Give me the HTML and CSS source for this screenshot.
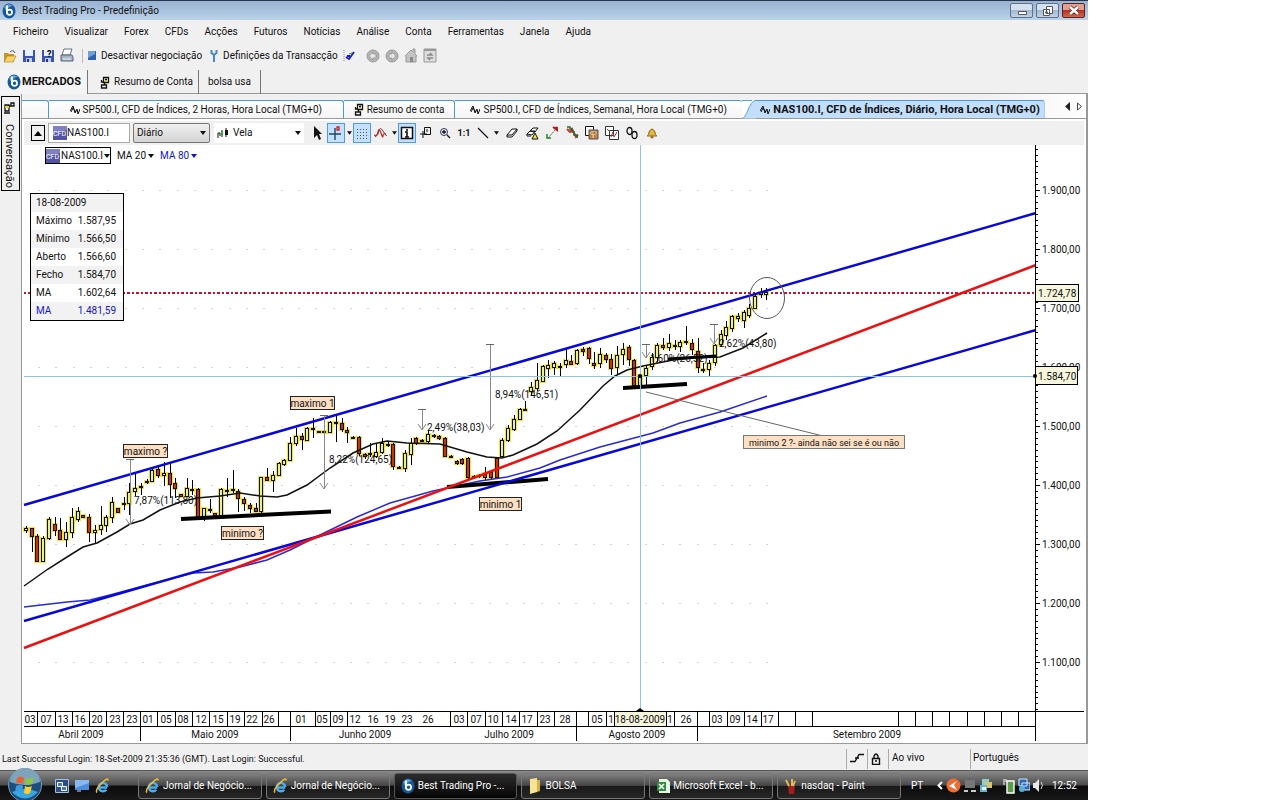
FILE: index.html
```html
<!DOCTYPE html>
<html lang="pt">
<head>
  <meta charset="UTF-8" />
  <title>Best Trading Pro - Predefinição</title>
  <link rel="stylesheet" href="styles.css">
</head>
<body>

  <!-- Shared icons -->
  <svg class="defs" width="0" height="0" aria-hidden="true">
    <symbol id="logo" viewBox="0 0 14 16">
      <ellipse cx="7" cy="8" rx="6.500" ry="7.500" fill="#15599a"/>
      <path d="M2 4q4-5 9-1q-4 0-7 5z" fill="#5da3d6"/>
      <path d="M5 2.500V11" stroke="#fff" stroke-width="1.800"/>
      <circle cx="7.500" cy="9.300" r="2.600" fill="none" stroke="#fff" stroke-width="1.700"/>
    </symbol>
    <symbol id="wave" viewBox="0 0 10 10">
      <path d="M0 6l3-5 2 7 2-4 1 5 2-5M1 7l2-4 3 4" fill="none" stroke="#111"/>
    </symbol>
    <symbol id="account" viewBox="0 0 10 13">
      <path d="M3.500 1.500h5v5h-5zM5 3.500h2M4.500 6.500v3M1.500 12v-3h5v3zM1.500 4v2h2" fill="none" stroke="#111" stroke-width="1.300"/>
      <path d="M5 4h2v2H5z" fill="#c8b838"/>
    </symbol>
    <symbol id="cfd" viewBox="0 0 14 14">
      <path d="M0 0h14v14H0z" fill="#5454a4"/>
      <path d="M0 0h14v4L0 8z" fill="#8080c4"/>
    </symbol>
    <symbol id="disk" viewBox="0 0 14 14">
      <path d="M1 1h12v12H1z" fill="#3a53b4"/>
      <path d="M3 1h8v6H3z" fill="#e8effc"/>
      <path d="M4 9h6v4H4z" fill="#c4cce0"/>
      <path d="M5 10h2v3H5z" fill="#223388"/>
    </symbol>
    <symbol id="caret" viewBox="0 0 6 4">
      <path d="M0 0h6L3 4z" fill="currentColor"/>
    </symbol>
    <symbol id="ie" viewBox="0 0 16 16">
      <path d="M13 9.500H5M12 12a4.500 4.500 0 1 1 1-3" fill="none" stroke="#48aef0" stroke-width="2.600"/>
      <path d="M2 15Q0 12 7 5T14 2" fill="none" stroke="#f4bd2c" stroke-width="1.600"/>
    </symbol>
  </svg>

  <div class="desktop">
    <header class="titlebar">
      <svg class="logo" width="14" height="16"><use href="#logo"/></svg>
      <span class="title">Best Trading Pro - Predefinição</span>
      <button class="win-btn" aria-label="Minimizar"><svg width="20" height="14"><path d="M6.500 7.500h8v3h-8z" fill="#fff" stroke="#556"/></svg></button>
      <button class="win-btn" aria-label="Restaurar"><svg width="20" height="14"><path d="M8.500 2.500h6v7h-6zM5.500 5.500h6v6h-6zM7.500 8h2v1h-2z" fill="#fff" stroke="#556"/></svg></button>
      <button class="win-btn close" aria-label="Fechar"><svg width="20" height="14"><path d="M6 3l8 7M14 3l-8 7" stroke="#622" stroke-width="4"/><path d="M6 3l8 7M14 3l-8 7" stroke="#fff" stroke-width="2.400"/></svg></button>
    </header>

    <nav class="menu">
      <a href="#">Ficheiro</a>
      <a href="#">Visualizar</a>
      <a href="#">Forex</a>
      <a href="#">CFDs</a>
      <a href="#">Acções</a>
      <a href="#">Futuros</a>
      <a href="#">Notícias</a>
      <a href="#">Análise</a>
      <a href="#">Conta</a>
      <a href="#">Ferramentas</a>
      <a href="#">Janela</a>
      <a href="#">Ajuda</a>
    </nav>

    <div class="toolbar">
      <button aria-label="Abrir"><svg width="14" height="14"><path d="M1 4h4l1 1h5v8H1z" fill="#c8952c"/><path d="M1 13l3-6h9l-3 6z" fill="#f8d46a" stroke="#a8781c" stroke-width=".6"/><path d="M7 3q3-3 5 1" fill="none" stroke="#456"/></svg></button>
      <button aria-label="Guardar"><svg width="14" height="14"><use href="#disk"/></svg></button>
      <button class="save-as" aria-label="Guardar como"><svg width="14" height="14"><use href="#disk"/><text x="6" y="8">?</text></svg></button>
      <button aria-label="Imprimir"><svg width="14" height="15"><path d="M4 1h8l-2 6H2z" fill="#fff" stroke="#678"/><path d="M1 7h11l1 2v4H1z" fill="#a9b6c4" stroke="#56657a"/><path d="M3 11h8" stroke="#eef"/></svg></button>
      <span class="sep"></span>
      <button class="text"><svg width="8" height="10"><path d="M0 0h8v9H0z" fill="#2f62ae"/><path d="M0 0h7v3L0 7z" fill="#70a0d8"/></svg>Desactivar negociação</button>
      <button class="text second"><svg width="8" height="12"><path d="M1.500 0v3L4 5l2.500-2V0M4 5v7" fill="none" stroke="#4a86c0" stroke-width="2"/></svg>Definições da Transacção</button>
      <button class="check" aria-label="Confirmar"><svg width="12" height="14"><path d="M1 1v12" stroke="#88a" stroke-dasharray="1 1"/><path d="M3 8l3 2 5-7M4 7l3 0" fill="none" stroke="#2020c0" stroke-width="2"/><path d="M6 5l3-1" stroke="#3c9c48"/></svg></button>
      <button aria-label="Anterior"><svg width="14" height="14"><circle cx="7" cy="7" r="6" fill="#b4b4b4" stroke="#999"/><path d="M3 7l4-4v2h3v4H7v2z" fill="#e4e4e4" stroke="#888" stroke-width=".6"/></svg></button>
      <button aria-label="Seguinte"><svg width="14" height="14"><circle cx="7" cy="7" r="6" fill="#b4b4b4" stroke="#999"/><path d="M11 7L7 3v2H4v4h3v2z" fill="#e4e4e4" stroke="#888" stroke-width=".6"/></svg></button>
      <button aria-label="Início"><svg width="14" height="15"><path d="M1 8l6-6 2 2V1h2v5l2 2h-1v6H2V8z" fill="#c4c4c4" stroke="#999"/><path d="M6 9h3v5H6z" fill="#888"/></svg></button>
      <button aria-label="Actualizar"><svg width="14" height="15"><path d="M1 1h12v13H1z" fill="#ddd" stroke="#999"/><path d="M1 2h12" stroke="#999" stroke-width="2"/><path d="M4 7h5L7 5M10 10H5l2 2" fill="none" stroke="#888" stroke-width="1.400"/></svg></button>
    </div>

    <div class="main-tabs">
      <button class="main-tab active"><svg width="14" height="16"><use href="#logo"/></svg>MERCADOS</button>
      <button class="main-tab account"><svg width="10" height="13"><use href="#account"/></svg>Resumo de Conta</button>
      <button class="main-tab">bolsa usa</button>
    </div>

    <div class="workspace">
      <aside class="sidebar">
        <button><svg width="14" height="14"><path d="M3 4h4v6H3zM2 12h6M9 2h3v3H9zM7 5h2" fill="none" stroke="#111" stroke-width="1.300"/><path d="M3 5h4v2H3z" fill="#d8d820"/></svg><span>Conversação</span></button>
      </aside>

      <section class="panel">
        <div class="tabs">
          <span class="tab-stub"></span>
          <button class="tab t1"><svg width="10" height="10"><use href="#wave"/></svg>SP500.I, CFD de Índices, 2 Horas, Hora Local (TMG+0)</button>
          <button class="tab t2"><svg width="10" height="13"><use href="#account"/></svg>Resumo de conta</button>
          <button class="tab t3"><svg width="10" height="10"><use href="#wave"/></svg>SP500.I, CFD de Índices, Semanal, Hora Local (TMG+0)</button>
          <svg class="wedge" width="14" height="19"><path d="M0 0h13Q9 1 6 10T0 18z" fill="#fff"/><path d="M0 18.500Q3 18 6 10T13 .500h1v18z" fill="#c2defa"/><path d="M0 18.500Q3 18 6 10T13 .500h1M0 .500h10" fill="none" stroke="#58a0e4"/></svg>
          <button class="tab t4"><svg width="10" height="10"><use href="#wave"/></svg>NAS100.I, CFD de Índices, Diário, Hora Local (TMG+0)</button>
          <span class="tab-nav">
            <button aria-label="Separador anterior"><svg width="5" height="9"><path d="M5 0v9L0 4.500z" fill="#222"/></svg></button>
            <button aria-label="Separador seguinte"><svg width="5" height="9"><path d="M.5 1v7L4.500 4.500z" fill="none" stroke="#444"/></svg></button>
          </span>
        </div>

        <div class="chart-tools">
          <button class="up" aria-label="Subir"><svg width="8" height="5"><path d="M4 0l4 5H0z" fill="#000"/></svg></button>
          <label class="symbol"><svg class="cfd" width="14" height="14"><use href="#cfd"/><text x="0" y="10">CFD</text></svg><input type="text" value="NAS100.I" aria-label="Símbolo"></label>
          <span class="drop period"><select aria-label="Período"><option>Diário</option></select><svg width="6" height="4"><use href="#caret"/></svg></span>
          <span class="drop style"><svg class="candle-icon" width="12" height="12"><path d="M1 6v5M1 6h2v3M5 3v7M9 1v9" fill="none" stroke="#111"/><path d="M4 4h2v4H4z" fill="#3a3"/><path d="M8 3h3v5H8z" fill="#111"/></svg><select aria-label="Estilo"><option>Vela</option></select><svg width="6" height="4"><use href="#caret"/></svg></span>
          <div class="group">
            <button aria-label="Ponteiro"><svg width="14" height="16"><path d="M4 1v12l3-3 2 5 2-1-2-5h3z" fill="#111"/></svg></button>
            <button class="on" aria-label="Cruz"><svg width="16" height="16"><path d="M1 9h12M7 3v12" stroke="#246" stroke-width="1.400"/><path d="M9 2h2v3H9z" fill="none" stroke="#c22" stroke-width="1.300"/></svg></button>
            <button class="caret" aria-label="Opções da cruz"><svg width="5" height="4"><use href="#caret"/></svg></button>
            <button class="on" aria-label="Grelha"><svg width="16" height="16"><path d="M3 4.500h11M3 7.500h11M3 10.500h11M3 13.500h11" stroke="#456" stroke-dasharray="1 2"/></svg></button>
            <button aria-label="Indicadores"><svg width="14" height="12"><path d="M0 8q3 2 4-3t3 1t2 3t3-2" fill="none" stroke="#c22" stroke-width="1.200"/><path d="M1 10q3-1 4-6t4 0t4 5" fill="none" stroke="#733"/></svg></button>
            <button class="caret" aria-label="Opções de indicadores"><svg width="5" height="4"><use href="#caret"/></svg></button>
            <button class="on" aria-label="Informação"><svg width="14" height="14"><path d="M1.500 1.500h11v11h-11z" fill="#fff" stroke="#111" stroke-width="1.500"/><path d="M7 3v2M5 6h2v5M5 11h4" fill="none" stroke="#111" stroke-width="1.600"/></svg></button>
            <button aria-label="Nota"><svg width="14" height="14"><path d="M5.500 1.500h6v7h-6zM8 3v3M1 8h7M4 5v7" fill="none" stroke="#111"/></svg></button>
            <button aria-label="Ampliar"><svg width="12" height="12"><circle cx="5" cy="5" r="3.500" fill="none" stroke="#336"/><path d="M3 5h4M5 3v4M8 8l3 3" stroke="#111" stroke-width="1.300"/></svg></button>
            <button class="ratio">1:1</button>
            <button aria-label="Linha"><svg width="12" height="12"><path d="M1 1l10 10" stroke="#111" stroke-width="1.300"/></svg></button>
            <button class="caret" aria-label="Opções de linha"><svg width="5" height="4"><use href="#caret"/></svg></button>
          </div>
          <div class="group wide">
            <button aria-label="Apagar"><svg width="12" height="12"><path d="M1 8l5-6h5L6 8zM1 8v2h5l5-6V2" fill="#fff" stroke="#111"/></svg></button>
            <button aria-label="Apagar tudo"><svg width="13" height="14"><path d="M4 5l3-3h5L9 6zM1 8l3-3h5L6 9zM1 8v2h4" fill="#fff" stroke="#111"/><path d="M6 13l3-6 3 6z" fill="#ee3" stroke="#111"/></svg></button>
            <button aria-label="Ordens"><svg width="12" height="14"><path d="M2 12L10 3" stroke="#555" stroke-dasharray="2 1"/><path d="M7 1l4 3V1M9 3l2-2" stroke="#a22" stroke-width="2"/><path d="M1 8v4h4" fill="none" stroke="#282" stroke-width="1.500"/></svg></button>
            <button aria-label="Posições"><svg width="13" height="14"><path d="M1 3l3 3 2-3 4 8 2-2" fill="none" stroke="#c33" stroke-width="2"/><path d="M1 1h3v2h2v3h2v3h3v3" fill="none" stroke="#2a6a30" stroke-width="1.500"/></svg></button>
            <button aria-label="Copiar modelo"><svg width="14" height="14"><path d="M.5.500h8v9h-8z" fill="#fff" stroke="#111"/><path d="M4 4h9v9H4z" fill="#c08040" stroke="#555"/><path d="M6 6h5v2H6zM8 6v6" stroke="#f8d8a0"/></svg></button>
            <button aria-label="Colar modelo"><svg width="14" height="14"><path d="M.5.500h8v9h-8zM4.500 4.500h9v9h-9z" fill="#fff" stroke="#333"/><path d="M2 3l3 3M6 11l2-5 1 5 3-5" fill="none" stroke="#933"/></svg></button>
            <button aria-label="Ligar gráficos"><svg width="12" height="14"><ellipse cx="3.500" cy="5" rx="2.500" ry="3.500" fill="none" stroke="#111" stroke-width="1.300"/><ellipse cx="8.500" cy="9" rx="2.500" ry="3.500" fill="none" stroke="#111" stroke-width="1.300"/></svg></button>
            <button aria-label="Alerta"><svg width="12" height="12"><path d="M1 9q2-1 2-4q3-6 6 0q0 3 2 4z" fill="#e0b838" stroke="#8c6818"/><circle cx="6" cy="10" r="1.500" fill="#a07020"/></svg></button>
          </div>
        </div>

        <div class="chart">
          <svg id="chart" viewBox="22 145 1064 598" preserveAspectRatio="xMinYMin meet"></svg>

          <div class="indicators">
            <button class="inst"><svg class="cfd" width="14" height="14"><use href="#cfd"/><text x="0" y="10">CFD</text></svg>NAS100.I<svg width="6" height="4"><use href="#caret"/></svg></button>
            <button>MA 20<svg width="6" height="4"><use href="#caret"/></svg></button>
            <button class="blue">MA 80<svg width="6" height="4"><use href="#caret"/></svg></button>
          </div>

          <table class="quote">
            <tr><th colspan="2">18-08-2009</th></tr>
            <tr><th>Máximo</th><td>1.587,95</td></tr>
            <tr><th>Mínimo</th><td>1.566,50</td></tr>
            <tr><th>Aberto</th><td>1.566,60</td></tr>
            <tr><th>Fecho</th><td>1.584,70</td></tr>
            <tr><th>MA</th><td>1.602,64</td></tr>
            <tr class="blue"><th>MA</th><td>1.481,59</td></tr>
          </table>
        </div>
      </section>
    </div>

    <div class="status">
      <span class="login">Last Successful Login: 18-Set-2009 21:35:36 (GMT). Last Login: Successful.</span>
      <span class="cell icon"><svg width="14" height="10"><path d="M0 8.500h5l4-7h5M5 5h4" fill="none" stroke="#111" stroke-width="1.300"/></svg></span>
      <span class="cell icon"><svg width="10" height="12"><path d="M1.500 5.500h7v6h-7zM3 5V3q2-4 4 0v2M4 8h2" fill="none" stroke="#111" stroke-width="1.400"/></svg></span>
      <span class="cell live">Ao vivo</span>
      <span class="cell lang">Português</span>
    </div>

    <footer class="taskbar">
      <button class="start" aria-label="Iniciar">
        <svg width="36" height="34"><circle cx="18" cy="18" r="16.500" fill="#1c4f80" stroke="#7d98ac"/><path d="M3 15a15 14 0 0 1 30 0q-15 6-30 0z" fill="#7ea4bc"/><path d="M5 25q13 13 26 0q-13-6-26 0z" fill="#3aa8e0"/><path d="M10 11q4-3 7 0l-1 6q-4-2-7 0z" fill="#ea6030"/><path d="M19 11q4 2 8-1l-2 7q-4 2-7 0z" fill="#8cc63c"/><path d="M9 19q4-2 7 0l-1 7q-4-3-7 0z" fill="#3c9ce0"/><path d="M18 19q3 2 7 0l-2 7q-3 2-6 0z" fill="#fccc30"/></svg>
      </button>
      <div class="quick">
        <button aria-label="Mudar de janela"><svg width="14" height="14"><path d="M.5.500h13v13H.5z" fill="#2c4c88" stroke="#a8c0e0"/><path d="M2.500 3.500h5v4h-5zM6.500 7.500h5v4h-5z" fill="#4878b8" stroke="#fff"/></svg></button>
        <button aria-label="Ambiente de trabalho"><svg width="14" height="14"><path d="M0 1h14v10H0z" fill="#4c8cdc"/><path d="M0 1h14v3L0 9z" fill="#88b8f0"/><path d="M2 12h4" stroke="#dde"/></svg></button>
        <button aria-label="Internet Explorer"><svg width="15" height="16"><use href="#ie"/></svg></button>
      </div>
      <div class="tasks">
        <button><svg width="15" height="16"><use href="#ie"/></svg>Jornal de Negócio...</button>
        <button><svg width="15" height="16"><use href="#ie"/></svg>Jornal de Negócio...</button>
        <button class="current"><svg width="14" height="16"><use href="#logo"/></svg>Best Trading Pro -...</button>
        <button><svg width="14" height="16"><path d="M2 1l7-1v14l-7 2z" fill="#f8e494"/><path d="M9 2h3v11l-3 1z" fill="#d8b040"/></svg>BOLSA</button>
        <button><svg width="14" height="16"><path d="M3 1h8l3 3v11H3z" fill="#e8f4e4"/><path d="M1 4h9v9H1z" fill="#2c8c3c"/><path d="M3 6l5 5M8 6l-5 5" stroke="#fff" stroke-width="1.600"/></svg>Microsoft Excel - b...</button>
        <button><svg width="14" height="16"><path d="M4 8h7l-1 8H5z" fill="#a02020"/><path d="M5 8L2 2M8 8V1M9 8l2-5" stroke="#e8b858" stroke-width="2"/></svg>nasdaq - Paint</button>
      </div>
      <div class="tray">
        <span class="kbd">PT</span>
        <svg width="6" height="9"><path d="M5 1L1.500 4.500 5 8" fill="none" stroke="#fff" stroke-width="2"/></svg>
        <svg width="15" height="15"><circle cx="7.500" cy="7.500" r="7" fill="#ee6c30"/><path d="M3 8l8-5-3 4 3 5z" fill="#fff"/></svg>
        <svg width="12" height="14"><path d="M1 1h10v8H1z" fill="#777"/><path d="M0 12h4M7 12h5" stroke="#ccc" stroke-width="2"/></svg>
        <svg class="last" width="14" height="15"><path d="M3 1h7v8H3z" fill="#8cd0c8"/><path d="M6 4h7v6H6z" fill="#d8c470"/><path d="M1 7h7v7H1z" fill="#68b0d8"/><path d="M3 9h4v3H3z" fill="#e8f8ff"/></svg>
        <svg width="12" height="16"><path d="M4 3h7v12H4z" fill="#5c9c48" stroke="#fff" stroke-width="1.400"/><path d="M1 1v6M3 1v3" stroke="#fff"/></svg>
        <svg width="12" height="15"><path d="M1 1h8v7H1zM4 5h8v7H4z" fill="#2868b8" stroke="#d8e8f8"/><circle cx="4" cy="11" r="3" fill="#58b0d8"/></svg>
        <svg width="11" height="13"><path d="M0 4h2l4-4v13L2 9H0z" fill="#e8e8e8"/><path d="M8 3q3 3 0 7" fill="none" stroke="#ddd"/></svg>
        <time>12:52</time>
      </div>
    </footer>
  </div>

  <script src="chart.js"></script>
</body>
</html>
```
FILE: styles.css
```css
* {
  box-sizing: border-box;
}

body {
  margin: 0;
  background: #fff;
  color: #111;
  font-family: Roboto, "Liberation Sans", sans-serif;
  font-size: 10px;
  line-height: 14px;
}

button {
  display: inline-flex;
  align-items: center;
  justify-content: center;
  margin: 0;
  padding: 0;
  border: none;
  background: none;
  color: inherit;
  font: inherit;
  white-space: nowrap;
}

svg {
  display: block;
  flex-shrink: 0;
}

.defs {
  position: absolute;
}

.desktop {
  display: flex;
  flex-direction: column;
  width: 85vw;
  min-height: 100vh;
  background: #f0f0f0;
}

/* Title bar */
.titlebar {
  display: flex;
  align-items: center;
  gap: 3px;
  height: 20px;
  padding: 0 3px 0 2px;
  border-top: 1px solid #26354c;
  background: linear-gradient(#98b2d0, #bad2ea);
}

.title {
  flex: 1;
  padding-left: 3px;
}

.win-btn {
  width: 23px;
  height: 15px;
  border: 1px solid #5d7188;
  border-radius: 2px;
  background: linear-gradient(#d4e0ee 45%, #a3b7ce 50%, #c0d4e8);
}

.win-btn.close {
  border-color: #5c2420;
  background: linear-gradient(#e0a090 45%, #b83020 50%, #d06848);
}

/* Menu */
.menu {
  display: flex;
  align-items: center;
  gap: 16px;
  height: 23px;
  padding-left: 13px;
}

.menu a {
  color: inherit;
  text-decoration: none;
}

.toolbar {
  display: flex;
  align-items: center;
  gap: 5px;
  height: 25px;
  padding-left: 3px;
}

.toolbar .sep {
  width: 1px;
  height: 14px;
  margin-left: 3px;
  background: #bbb;
}

.toolbar .text {
  gap: 5px;
}

.toolbar .second {
  margin-left: 3px;
}

.toolbar .check {
  margin-right: 6px;
}

.save-as text {
  font-size: 9px;
  font-weight: bold;
}

/* Main tabs */
.main-tabs {
  display: flex;
  height: 26px;
  padding-top: 2px;
  border-bottom: 1px solid #999;
}

.main-tab {
  gap: 4px;
  height: 24px;
  padding: 0 9px;
  border-right: 1px solid #777;
}

.main-tab.account {
  padding: 0 5px 0 12px;
}

.main-tab.active {
  gap: 1px;
  padding: 0 6px 0 7px;
  background: #f4f4f4;
  font-size: 11px;
  font-weight: bold;
}

/* Workspace */
.workspace {
  display: flex;
  flex: 1;
}

.sidebar {
  width: 21px;
  padding: 2px 1px 0;
}

.sidebar button {
  flex-direction: column;
  justify-content: flex-start;
  gap: 9px;
  width: 19px;
  height: 95px;
  padding: 4px 4px 0 0;
  border: 1px solid #000;
  font-size: 11px;
}

.sidebar span {
  writing-mode: vertical-rl;
}

.panel {
  display: flex;
  flex: 1;
  flex-direction: column;
  min-width: 0;
  margin-bottom: 1px;
  border: solid #999;
  border-width: 0 2px 1px 1px;
  background: #fff;
}

.tabs {
  display: flex;
  height: 25px;
  padding-top: 6px;
  border-bottom: 1px solid #999;
  background: linear-gradient(90deg, #f0f0f0 90%, #fff);
}

.tab-stub,
.tab {
  border: solid #4a98e0;
  border-width: 1px 1px 0 0;
  border-radius: 0 3px 0 0;
  background: linear-gradient(#fff, #f4f4f4);
}

.tab {
  gap: 3px;
  min-width: 0;
}

.tab-stub {
  flex: 26;
}

.t1 {
  flex: 295;
}

.t2 {
  flex: 111;
}

.t3 {
  flex: 288;
  border-right: none;
}

.wedge {
  margin-bottom: -1px;
}

.t4 {
  flex: 289;
  border-right-color: #a8ccf0;
  background: #c2defa;
  font-size: 11px;
  font-weight: bold;
}

.tab-nav {
  display: flex;
  align-items: center;
  gap: 7px;
  padding: 0 4px 6px 20px;
}

.chart-tools {
  display: flex;
  align-items: center;
  height: 24px;
  margin: 2px 2px 0;
  padding-left: 7px;
  background: #f0f0f0;
}

.up {
  width: 14px;
  height: 16px;
  border: 1px solid #000;
}

.symbol {
  display: flex;
  align-items: center;
  width: 82px;
  height: 20px;
  margin-left: 3px;
  padding-left: 4px;
  border: 1px solid #aaa;
  background: #fff;
}

.symbol input {
  width: 60px;
  padding: 0;
  border: none;
  background: none;
  color: inherit;
  font: inherit;
}

.chart-tools .cfd text,
.chart .cfd text {
  fill: #fff;
  font-size: 7px;
}

.drop {
  display: flex;
  align-items: center;
  height: 20px;
  padding: 0 3px;
  background: #fff;
}

.drop select {
  flex: 1;
  padding: 0;
  border: none;
  appearance: none;
  background: none;
  color: inherit;
  font: inherit;
}

.period {
  width: 77px;
  margin: 0 4px 0 3px;
  border: 1px solid #777;
  border-radius: 2px;
  background: linear-gradient(#f0f0f0, #d4d4d4);
}

.style {
  width: 90px;
}

.candle-icon {
  margin-right: 4px;
}

.group {
  display: flex;
  gap: 1px;
  margin-left: 4px;
}

.group.wide {
  gap: 2px;
  margin-left: 4px;
}

.group button {
  width: 18px;
  height: 20px;
}

.group .caret {
  width: 6px;
}

.group .ratio {
  font-size: 9px;
  font-weight: bold;
}

.group .on {
  border: 1px solid #4a9cee;
  background: #c4e0fc;
}

/* Chart */
.chart {
  position: relative;
  flex: 1;
}

.chart > svg {
  width: 100%;
}

.chart text {
  fill: #111;
}

.chart .mid {
  text-anchor: middle;
}

.chart .long {
  font-size: 9px;
}

.crisp {
  shape-rendering: crispEdges;
}

.indicators {
  position: absolute;
  top: 2px;
  left: 23px;
  display: flex;
  gap: 6px;
}

.indicators button {
  gap: 2px;
  height: 17px;
}

.indicators .inst {
  gap: 1px;
  width: 66px;
  border: 1px solid #000;
}

.blue {
  color: #1414d8;
}

.quote {
  position: absolute;
  top: 48px;
  left: 8px;
  width: 94px;
  border: 1px solid #000;
  border-spacing: 0;
  background: #fff;
}

.quote th,
.quote td {
  height: 18px;
  padding: 0 0 0 5px;
  font-weight: normal;
  text-align: left;
}

.quote td {
  padding: 0 7px 0 0;
  text-align: right;
}

.quote tr:nth-child(odd) {
  background: #f2f2f2;
}

/* Status bar */
.status {
  display: flex;
  align-items: center;
  height: 25px;
  padding: 4px 0 1px 2px;
}

.login {
  flex: 1;
  font-size: 9px;
}

.cell {
  height: 20px;
  padding: 2px 3px;
  border-left: 1px solid #aaa;
}

.cell.icon {
  width: 21px;
  padding-top: 4px;
}

.cell.live {
  width: 82px;
}

.cell.lang {
  width: 118px;
  padding-left: 2px;
}

/* Taskbar */
.taskbar {
  display: flex;
  align-items: center;
  height: 30px;
  border-top: 1px solid #555;
  background: linear-gradient(#8a8a8a, #4c4c4c 48%, #0c0c0c 52%, #181818);
  color: #fff;
}

.start {
  width: 36px;
  height: 34px;
  margin: -4px 12px 0 7px;
}

.quick {
  display: flex;
  gap: 6px;
  width: 83px;
}

.tasks {
  display: flex;
  flex: 1;
  gap: 4px;
}

.tasks button {
  flex: 1;
  justify-content: flex-start;
  gap: 3px;
  height: 26px;
  padding-left: 6px;
  border: 1px solid #777;
  border-radius: 3px;
  background: linear-gradient(#808080, #444 48%, #1a1a1a 52%, #262626);
}

.tasks .current {
  border-color: #555;
  background: linear-gradient(#2c2c2c, #050505);
}

.tray {
  display: flex;
  align-items: center;
  gap: 3px;
  width: 187px;
  padding-left: 10px;
}

.kbd {
  width: 23px;
}

.tray .last {
  margin-right: 7px;
}

.tray time {
  margin-left: 5px;
}
```
FILE: chart.js
```js
const svg = document.getElementById('chart');

// Each candle: high, body top, body bottom, low, 1 = up / 0 = down
const candles = [
  [526,528,531,533,1], [528,528,537,552,0], [534,536,562,562,0], [536,538,562,562,1], [517,519,539,540,1],
  [517,524,531,536,0], [518,530,540,540,0], [522,532,540,547,1], [508,517,533,538,1], [507,511,520,522,1],
  [515,515,518,518,0], [514,517,533,542,0], [525,530,533,543,1], [506,525,530,535,1], [515,517,526,532,1],
  [497,502,518,523,1], [508,508,513,513,0], [497,503,505,510,1], [483,492,504,515,1], [472,488,492,496,1],
  [483,486,488,495,1], [479,481,482,484,1], [469,470,482,482,1], [467,469,476,478,0], [462,473,476,486,1],
  [463,473,485,498,0], [478,483,489,498,0], [494,494,497,497,0], [478,488,497,497,1], [480,489,491,495,1],
  [488,489,518,519,0], [508,508,517,521,1], [499,509,511,513,0], [513,513,516,516,0], [488,489,516,516,1],
  [478,490,492,497,0], [470,489,491,493,0], [489,491,499,512,0], [497,499,504,511,0], [503,505,509,513,0],
  [503,508,512,512,0], [477,477,512,517,1], [468,477,481,481,0], [471,475,481,492,1], [462,463,476,476,1],
  [459,460,465,466,1], [437,443,461,461,1], [428,436,444,446,1], [433,436,440,450,0], [427,428,441,441,1],
  [418,428,430,438,0], [431,431,433,433,0], [429,431,433,435,0], [421,422,433,433,1], [416,422,424,442,0],
  [418,423,430,432,0], [427,430,433,443,0], [436,437,438,439,0], [436,437,454,456,0], [453,454,457,459,0],
  [443,453,455,457,0], [444,452,457,458,1], [438,443,453,454,1], [442,444,446,447,0], [443,444,467,470,0],
  [466,467,469,469,0], [450,453,469,472,1], [438,443,455,465,1], [437,438,444,445,0], [439,440,441,442,1],
  [430,434,442,443,1], [434,435,437,438,1], [435,436,439,440,0], [437,438,457,457,0], [455,456,457,458,1],
  [460,461,464,465,0], [458,459,464,465,0], [457,458,478,479,0], [475,476,478,479,0], [474,475,477,478,0],
  [467,473,478,481,0], [471,472,478,479,0], [457,458,478,479,0], [438,440,457,457,1], [425,428,441,442,1],
  [415,419,430,431,1], [408,409,420,420,1], [401,409,411,411,0], [382,387,392,395,1], [363,380,389,391,1],
  [365,366,382,382,1], [360,365,369,378,1], [361,363,368,375,1], [363,366,368,376,0], [348,360,365,368,1],
  [355,361,365,365,0], [349,350,364,365,1], [347,349,352,356,0], [347,348,359,364,0], [352,363,366,369,0],
  [348,354,364,368,1], [353,355,360,363,0], [354,359,369,375,0], [346,355,368,375,1], [343,349,355,365,1],
  [345,347,360,366,0], [359,360,386,387,0], [373,375,386,387,1], [365,368,376,385,1], [353,357,367,370,1],
  [343,345,358,362,1], [338,345,348,350,0], [334,343,348,351,1], [340,345,347,350,0], [340,342,347,352,1],
  [326,341,343,345,0], [339,343,350,355,0], [338,351,368,373,0], [363,369,371,373,0], [360,363,370,376,1],
  [344,345,363,366,1], [330,334,345,347,1], [321,327,336,340,1], [315,316,329,332,1], [313,316,319,322,1],
  [310,312,321,328,1], [304,308,316,318,1], [295,296,309,309,1], [288,292,295,298,1], [288,292,295,300,1]
];

const firstX = 26;
const step = 5.74;

function add(name, attrs, text) {
  const el = document.createElementNS('http://www.w3.org/2000/svg', name);
  for (const key in attrs) {
    el.setAttribute(key, attrs[key]);
  }
  if (text) el.textContent = text;
  svg.appendChild(el);
}

function line(x1, y1, x2, y2, stroke, width, extra) {
  add('line', Object.assign({ x1, y1, x2, y2, stroke, 'stroke-width': width || 1 }, extra));
}

function label(x, y, text, cls) {
  add('text', { x, y, class: cls || '' }, text);
}

const crisp = { class: 'crisp' };

// Grid dots, one row per 100 points
for (let y = 190; y < 700; y += 59) {
  for (let x = 38; x < 770; x += 17.33) {
    add('rect', { x: Math.round(x), y, width: 2, height: 1, fill: '#d4d4d4' });
  }
}

line(24, 293, 1036, 293, '#c8102c', 2, { 'stroke-dasharray': '2 2 3 2', class: 'crisp' });

// Candles
candles.forEach(([high, top, bottom, low, up], i) => {
  const x = Math.round(firstX + i * step);
  const h = Math.max(bottom - top, 2);
  add('rect', { x: x - 3, y: top - 1, width: 6, height: h + 2, fill: '#f2e23c', class: 'crisp' });
  line(x, high, x, low, '#000', 1, crisp);
  add('rect', { x: x - 2, y: top, width: 4, height: h, fill: '#111', class: 'crisp' });
  if (h > 2) {
    add('rect', { x: x - 1, y: top + 1, width: 2, height: h - 2, fill: up ? '#dff0a0' : '#c83018', class: 'crisp' });
  }
});

// Moving averages
add('polyline', {
  points: '24,586 48,569 67,557 83,547 97,543 117,532 130,524 143,520 160,510 180,502 197,498 220,496 240,493 260,496 277,497 287,495 307,485 330,468 353,453 373,444 387,441 407,443 440,444 467,452 487,457 502,458 513,455 537,444 557,431 580,410 603,386 615,376 627,370 643,366 673,360 693,358 720,357 743,348 767,333',
  fill: 'none', stroke: '#111', 'stroke-width': 1.5
});
add('polyline', {
  points: '24,607 67,602 90,600 110,595 147,585 193,573 213,572 240,567 267,560 290,550 320,535 357,517 390,503 433,491 480,481 507,477 540,468 560,460 600,447 653,433 680,423 720,412 767,396',
  fill: 'none', stroke: '#2a2ad8', 'stroke-width': 1.5
});

// Supports
line(181, 519, 331, 511.5, '#000', 4);
line(447, 487, 548, 479, '#000', 4);
line(623, 388, 687, 384, '#000', 4);
line(668, 359, 716, 356, '#000', 3);

// Channel
line(24, 505, 1036, 213, '#0808dc', 2.5);
line(24, 621, 1036, 330, '#0808dc', 2.5);
line(24, 648, 1036, 265, '#ee1010', 2.5);

add('ellipse', { cx: 767, cy: 298, rx: 17.5, ry: 20.5, fill: 'none', stroke: '#555' });
line(646, 392, 823, 436, '#666');

// Measures: x, start, end, then the text beside them
[
  [130, 459, 525, 134, 504, '7,87%(113,80)'],
  [324, 415, 489, 329, 463, '8,22%(124,65)'],
  [422, 409, 430, 427, 431, '2,49%(38,03)'],
  [490, 344, 430, 495, 398, '8,94%(146,51)'],
  [646, 344, 358, 650, 362, '1,60%(26,52)'],
  [714, 324, 344, 719, 347, '2,62%(43,80)']
].forEach(([x, y1, y2, tx, ty, text]) => {
  line(x, y1, x, y2, '#888', 1, crisp);
  line(x - 4, y1, x + 4, y1, '#666', 1, crisp);
  add('path', { d: `M${x - 4} ${y2 - 6}L${x} ${y2}L${x + 4} ${y2 - 6}`, fill: 'none', stroke: '#888' });
  label(tx, ty, text);
});

// Notes
[
  [123, 444, 45, 'maximo ?', '#222'],
  [290, 396, 45, 'maximo 1', '#222'],
  [221, 526, 43, 'minimo ?', '#222'],
  [479, 497, 43, 'minimo 1', '#222'],
  [743, 435, 162, 'minimo 2 ?- ainda não sei se é ou não', '#777']
].forEach(([x, y, width, text, stroke]) => {
  add('rect', { x: x + 0.5, y: y + 0.5, width: width - 1, height: 13, fill: '#fddfc4', stroke });
  label(x + width / 2, y + 11, text, width > 100 ? 'mid long' : 'mid');
});

// Crosshair
line(640.5, 145, 640.5, 711, '#8cc4e4', 1, crisp);
line(24, 376.5, 1036, 376.5, '#8cc4e4', 1, crisp);
add('circle', { cx: 640, cy: 376, r: 2, fill: '#000' });
add('path', { d: 'M636 711l4-3 4 3z', fill: '#000' });

// Price axis
line(1035.5, 145, 1035.5, 741, '#000', 1, crisp);
for (let i = 0; i <= 95; i++) {
  const y = Math.round(148.7 + i * 5.9);
  const major = (i - 7) % 10 === 0;
  line(1036, y + 0.5, major ? 1040 : 1038, y + 0.5, '#000', 1, crisp);
}
for (let i = 0; i < 9; i++) {
  label(1042, 194 + i * 59, `1.${9 - i}00,00`);
}
add('rect', { x: 1035.5, y: 284.5, width: 43, height: 17, fill: '#f6f6dc', stroke: '#000' });
label(1038, 297, '1.724,78');
add('rect', { x: 1035.5, y: 366.5, width: 42, height: 18, fill: '#f6f6dc', stroke: '#000' });
label(1038, 380, '1.584,70');
add('circle', { cx: 1035, cy: 376, r: 2, fill: '#000' });

// Date axis
line(24, 711.5, 1084, 711.5, '#000', 1, crisp);
line(24, 726.5, 1036, 726.5, '#000', 1, crisp);
[37, 55, 72, 89, 106, 123, 157, 175, 192, 209, 227, 244, 262, 278, 315, 330, 347,
  450, 467, 485, 502, 519, 537, 554, 588, 606, 674, 709, 727, 744, 761, 778, 795,
  812, 898, 915, 932, 949, 967, 984, 1001, 1018].forEach(x => {
  line(x + 0.5, 711, x + 0.5, 727, '#000', 1, crisp);
});
[140, 290, 576, 697].forEach(x => line(x + 0.5, 711, x + 0.5, 741, '#000', 1, crisp));

[
  [30, '03'], [46, '07'], [63, '13'], [80, '16'], [97, '20'], [115, '23'], [132, '23'],
  [148, '01'], [166, '05'], [183, '08'], [201, '12'], [218, '15'], [235, '19'], [252, '22'], [269, '26'],
  [301, '01'], [322, '05'], [338, '09'], [355, '12'], [373, '16'], [390, '19'], [407, '23'], [428, '26'],
  [459, '03'], [476, '07'], [493, '10'], [511, '14'], [527, '17'], [545, '23'], [565, '28'],
  [597, '05'], [611, '1'], [670, '1'], [686, '26'],
  [717, '03'], [735, '09'], [752, '14'], [768, '17']
].forEach(([x, text]) => label(x, 723, text, 'mid'));

add('rect', { x: 614.5, y: 711.5, width: 52, height: 15, fill: '#f6f6dc', stroke: '#000' });
label(640, 723, '18-08-2009', 'mid');

[
  [81, 'Abril 2009'], [215, 'Maio 2009'], [365, 'Junho 2009'],
  [509, 'Julho 2009'], [637, 'Agosto 2009'], [867, 'Setembro 2009']
].forEach(([x, text]) => label(x, 738, text, 'mid'));
```
